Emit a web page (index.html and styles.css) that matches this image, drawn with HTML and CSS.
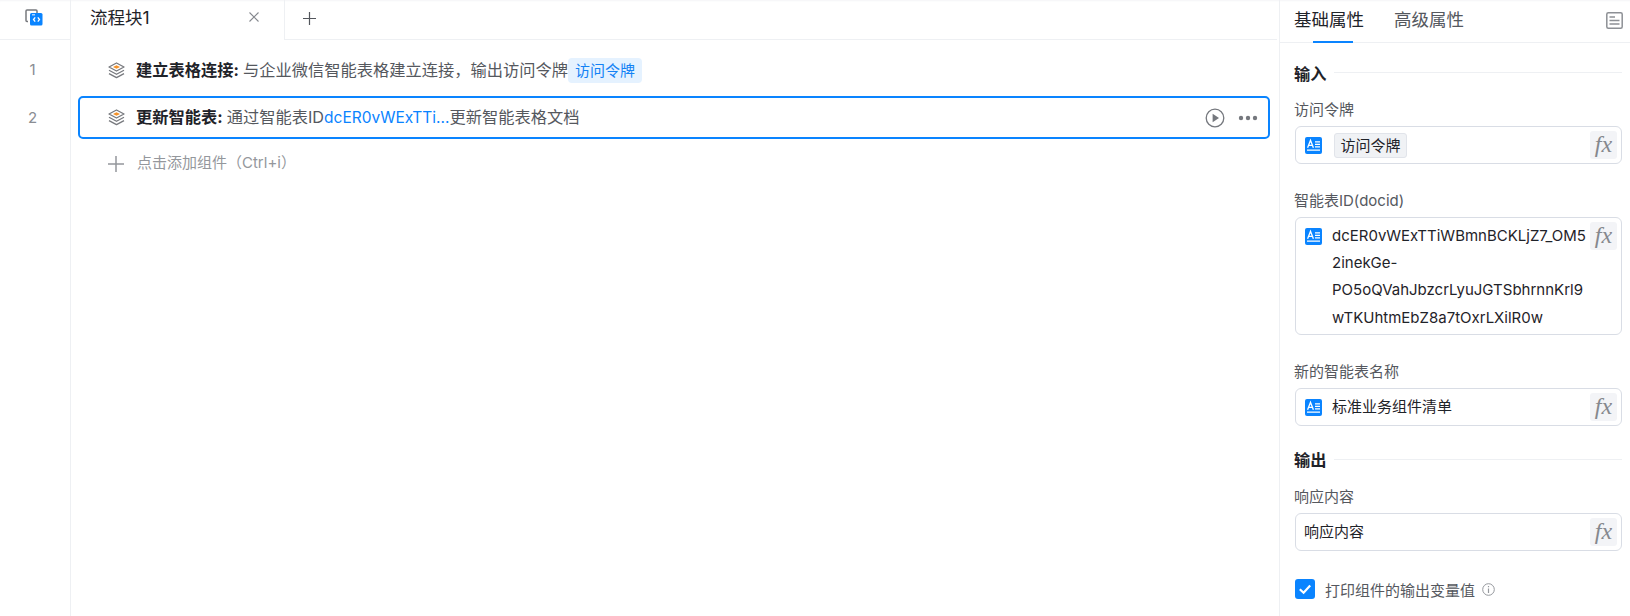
FILE: index.html
```html
<!DOCTYPE html>
<html lang="zh-CN">
<head>
<meta charset="utf-8">
<title>流程块1</title>
<link rel="stylesheet" href="styles.css">
</head>
<body>
<svg class="defs" width="0" height="0" aria-hidden="true">
  <symbol id="stack" viewBox="0 0 17 17">
    <path d="M8.5 1 16 5 8.500 9 1 5Z" fill="none" stroke="#77797e" stroke-width="1.300" stroke-linejoin="round"/>
    <path d="M8.500 3.300 12 5 8.500 6.700 5 5Z" fill="#f5932a"/>
    <path d="M1 8.300 8.500 12.300 16 8.300M1 11.600 8.500 15.600 16 11.600" fill="none" stroke="#77797e" stroke-width="1.300" stroke-linejoin="round"/>
  </symbol>
  <symbol id="textvar" viewBox="0 0 17 17">
    <rect width="17" height="17" rx="2" fill="#0a84ff"/>
    <path d="M2.600 10.800 5.500 3.200 8.400 10.800M3.600 8.400H7.400M10 4.800H15M10 7.300H15M10 9.800H15M2 13.200H15" fill="none" stroke="#fff" stroke-width="1.300"/>
  </symbol>
</svg>
<div class="app">
  <main class="editor">
    <header class="tabbar">
      <div class="gutter-head">
        <svg class="block-icon" viewBox="0 0 18 17" width="18" height="17">
          <path d="M3 12.500H2A1 1 0 0 1 1 11.500V2A1 1 0 0 1 2 1H11A1 1 0 0 1 12 2V4" fill="none" stroke="#77797e" stroke-width="1.500"/>
          <rect x="5" y="4" width="12.500" height="12.500" rx="1.500" fill="#0a84ff"/>
          <path d="M7 5.800H10" stroke="#cfe6ff" stroke-width="1.200"/>
          <path d="M10.200 8.300 8.500 10.500 10.200 12.700M12.800 8.300 14.500 10.500 12.800 12.700" fill="none" stroke="#fff" stroke-width="1.300"/>
        </svg>
      </div>
      <div class="tab">
        <span class="tab-title">流程块1</span>
        <svg class="tab-close" viewBox="0 0 10 10" width="10" height="10"><path d="M.5.500 9.500 9.500M9.500.500.500 9.500" stroke="#85888e" stroke-width="1.100"/></svg>
      </div>
      <div class="tab-add">
        <svg viewBox="0 0 13 13" width="13" height="13"><path d="M6.500 0V13M0 6.500H13" stroke="#53565c" stroke-width="1.200"/></svg>
      </div>
    </header>
    <div class="canvas">
      <ol class="gutter">
        <li class="line-no">1</li>
        <li class="line-no">2</li>
      </ol>
      <div class="rows">
        <div class="row">
          <svg class="row-icon"><use href="#stack"/></svg>
          <strong class="row-name">建立表格连接:</strong>
          <span class="row-desc">与企业微信智能表格建立连接，输出访问令牌</span><span class="var-tag">访问令牌</span>
        </div>
        <div class="row row-active">
          <svg class="row-icon"><use href="#stack"/></svg>
          <strong class="row-name">更新智能表:</strong>
          <span class="row-desc">通过智能表ID<span class="link">dcER0vWExTTi...</span>更新智能表格文档</span>
          <div class="row-actions">
            <svg viewBox="0 0 20 20" width="20" height="20"><circle cx="10" cy="10" r="8.800" fill="none" stroke="#75787e" stroke-width="1.300"/><path d="M7.600 5.700 14 10 7.600 14.300Z" fill="#75787e"/></svg>
            <svg viewBox="0 0 20 6" width="20" height="6"><circle cx="3" cy="3" r="2.200" fill="#75787e"/><circle cx="10" cy="3" r="2.200" fill="#75787e"/><circle cx="17" cy="3" r="2.200" fill="#75787e"/></svg>
          </div>
        </div>
        <div class="row row-add">
          <svg class="add-icon" viewBox="0 0 16 16" width="16" height="16"><path d="M8 0V16M0 8H16" stroke="#94979c" stroke-width="1.500"/></svg>
          <span>点击添加组件（Ctrl+i）</span>
        </div>
      </div>
    </div>
  </main>
  <aside class="panel">
    <header class="panel-tabs">
      <span class="panel-tab panel-tab-active">基础属性</span>
      <span class="panel-tab">高级属性</span>
      <svg class="panel-toggle" viewBox="0 0 17 17" width="17" height="17">
        <rect x=".8" y=".8" width="15.400" height="15.400" rx="1.500" fill="none" stroke="#8d9095" stroke-width="1.500"/>
        <path d="M3.500 5H9M3.500 8.500H13.500M3.500 12H13.500" stroke="#8d9095" stroke-width="1.500"/>
      </svg>
    </header>
    <div class="panel-body">
      <div class="section-head"><span>输入</span><i class="rule"></i></div>
      <label class="field-label">访问令牌</label>
      <div class="input">
        <svg class="type-icon"><use href="#textvar"/></svg>
        <span class="chip">访问令牌</span>
        <span class="fx">fx</span>
      </div>
      <label class="field-label">智能表ID(docid)</label>
      <div class="input input-multi">
        <svg class="type-icon"><use href="#textvar"/></svg>
        <div class="multi-text">dcER0vWExTTiWBmnBCKLjZ7_OM5<br>2inekGe-<br>PO5oQVahJbzcrLyuJGTSbhrnnKrl9<br>wTKUhtmEbZ8a7tOxrLXilR0w</div>
        <span class="fx">fx</span>
      </div>
      <label class="field-label">新的智能表名称</label>
      <div class="input">
        <svg class="type-icon"><use href="#textvar"/></svg>
        <span class="input-text">标准业务组件清单</span>
        <span class="fx">fx</span>
      </div>
      <div class="section-head section-head-out"><span>输出</span><i class="rule"></i></div>
      <label class="field-label">响应内容</label>
      <div class="input input-plain">
        <span class="input-text">响应内容</span>
        <span class="fx">fx</span>
      </div>
      <div class="check-row">
        <span class="checkbox"><svg viewBox="0 0 20 20" width="20" height="20"><path d="M4.800 10.200 8.600 13.800 15.200 6.600" fill="none" stroke="#fff" stroke-width="2.200"/></svg></span>
        <span class="check-label">打印组件的输出变量值</span>
        <svg class="info" viewBox="0 0 13 13" width="13" height="13"><circle cx="6.500" cy="6.500" r="5.800" fill="none" stroke="#95989d" stroke-width="1"/><path d="M6.500 5.500V10M6.500 3V4.300" stroke="#95989d" stroke-width="1.200"/></svg>
      </div>
    </div>
  </aside>
</div>
</body>
</html>
```

FILE: styles.css
```css
* { box-sizing: border-box; }
html, body { margin: 0; height: 616px; overflow: hidden; background: #fff; }
body {
  font-family: "Inter", "Noto Sans CJK SC", sans-serif;
  color: #1f2329;
}
.defs { position: absolute; }
.app { display: flex; height: 616px; box-shadow: inset 0 2px 2px -1px #f4f5f7; }

/* editor */
.editor { width: 1277px; display: flex; flex-direction: column; flex: none; }
.tabbar { display: flex; height: 40px; flex: none; }
.gutter-head {
  width: 70px;
  display: flex;
  justify-content: center;
  padding-top: 9px;
  border-bottom: 1px solid #eef0f3;
}
.block-icon { display: block; margin-left: -3px; }
.tab {
  width: 215px;
  display: flex;
  align-items: flex-start;
  justify-content: space-between;
  padding: 6px 25px 0 19px;
  border-left: 1px solid #eef0f3;
  border-right: 1px solid #eef0f3;
}
.tab-title { font-size: 17.500px; line-height: 24px; }
.tab-close { display: block; margin-top: 6px; }
.tab-add { flex: 1; padding: 12px 0 0 18px; border-bottom: 1px solid #eef0f3; }
.tab-add svg { display: block; }

.canvas { display: flex; flex: 1; }
.gutter {
  list-style: none;
  margin: 0;
  padding: 8px 0 0;
  width: 71px;
  border-right: 1px solid #eef0f3;
  flex: none;
}
.line-no {
  height: 48px;
  line-height: 44px;
  text-align: center;
  font-size: 15px;
  color: #8a8d93;
  padding-right: 5px;
}
.rows { flex: 1; padding: 9px 7px 0; min-width: 0; }
.row {
  height: 43px;
  margin-bottom: 4px;
  display: flex;
  align-items: center;
  padding-left: 28px;
  border: 2px solid transparent;
  border-radius: 5px;
  font-size: 16.250px;
  line-height: 22px;
  color: #55585e;
  white-space: nowrap;
}
.row-name, .row-desc { padding-bottom: 2px; }
.row-active { border-color: #0a84ff; }
.row-active .row-desc { padding-bottom: 1px; }
.row-icon { width: 17px; height: 17px; flex: none; margin-right: 11px; }
.row-name { font-weight: 700; color: #1f2329; margin-right: 4px; }
.link { color: #0a84ff; font-size: 15.500px; }
.var-tag {
  height: 25px;
  line-height: 25px;
  padding: 0 7px;
  border-radius: 4px;
  background: #e5f2ff;
  color: #1482f5;
  font-size: 15px;
}
.row-actions { margin-left: auto; display: flex; align-items: center; gap: 13px; padding-right: 10px; }
.row-add { color: #94979c; font-size: 15px; margin-top: -1px; }
.row-add span { padding-bottom: 2px; }
.add-icon { margin-right: 13px; flex: none; }

/* panel */
.panel { margin-left: 2px; flex: 1; border-left: 1px solid #eef0f3; min-width: 0; }
.panel-tabs {
  height: 43px;
  display: flex;
  align-items: flex-start;
  gap: 30px;
  padding: 7px 7px 0 14px;
  border-bottom: 1px solid #eef0f3;
}
.panel-tab { font-size: 17.500px; line-height: 26px; color: #55585e; }
.panel-tab-active { color: #1f2329; position: relative; }
.panel-tab-active::after {
  content: "";
  position: absolute;
  left: 19px;
  bottom: -10px;
  width: 40px;
  height: 2px;
  background: #0a84ff;
}
.panel-toggle { margin-left: auto; margin-top: 5px; }
.panel-body { padding: 19px 8px 0 15px; }
.section-head { display: flex; height: 24px; gap: 7px; margin-left: -1px; font-size: 16.250px; font-weight: 700; line-height: 24px; }
.section-head .rule { flex: 1; height: 1px; margin-top: 10px; background: #eef0f3; }
.section-head-out { margin-top: 22px; }
.section-head-out .rule { margin-top: 11px; }
.field-label {
  display: block;
  margin: 13px 0 0 -1px;
  height: 20px;
  line-height: 22px;
  font-size: 15px;
  color: #55585e;
}
.section-head-out + .field-label { margin-top: 14px; }
.input {
  margin-top: 7px;
  min-height: 38px;
  display: flex;
  align-items: center;
  padding: 0 4px 0 9px;
  border: 1px solid #d9dde5;
  border-radius: 6px;
  font-size: 15px;
  color: #1f2329;
}
.input + .field-label { margin-top: 26px; }
.input-multi { align-items: flex-start; padding-top: 4px; padding-bottom: 4px; height: 118px; }
.input-plain { padding-left: 8px; }
.type-icon { width: 17px; height: 17px; flex: none; margin-right: 10px; }
.input-multi .type-icon { margin-top: 6px; }
.chip {
  height: 25px;
  line-height: 23px;
  margin-left: 2px;
  padding: 0 5.500px;
  border: 1px solid #e1e4ea;
  border-radius: 3px;
  background: #f0f2f5;
}
.input-text { line-height: 20px; }
.multi-text { flex: 1; min-width: 0; line-height: 27.200px; font-size: 15px; white-space: nowrap; }
.fx {
  margin-left: auto;
  flex: none;
  width: 27px;
  height: 28px;
  border-radius: 3px;
  background: #f3f4f7;
  color: #85888e;
  font-family: "Liberation Serif", serif;
  font-style: italic;
  font-size: 24px;
  line-height: 26px;
  text-align: center;
}
.check-row { display: flex; align-items: center; margin-top: 28px; height: 20px; font-size: 15px; color: #55585e; }
.checkbox { width: 20px; height: 20px; border-radius: 3px; background: #0a84ff; flex: none; margin-right: 10px; }
.checkbox svg { display: block; }
.info { margin-left: 7px; }
```
